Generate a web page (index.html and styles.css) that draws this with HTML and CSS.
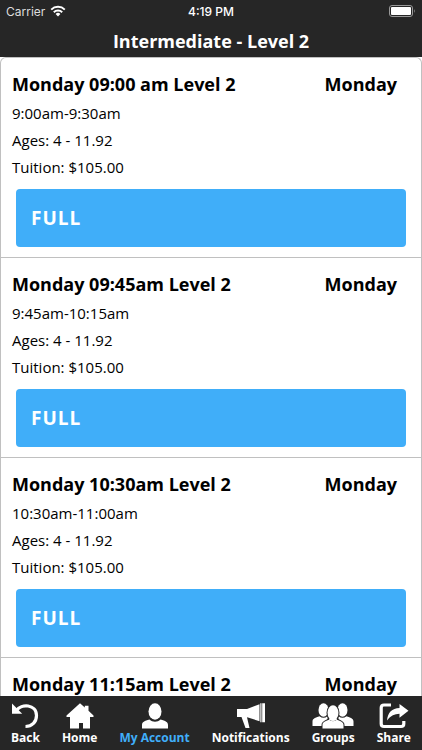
FILE: index.html
```html
<!DOCTYPE html>
<html lang="en">
<head>
    <meta charset="UTF-8">
    <meta name="viewport" content="width=device-width, initial-scale=1.0">
    <title>Intermediate - Level 2</title>
    <link rel="stylesheet" href="styles.css">
</head>
<body>
    <header>
        <div class="status-bar">
            <span class="carrier">
                Carrier
                <svg width="16" height="12" viewBox="0 0 16 12" fill="none" stroke="#fff" stroke-width="2">
                    <path d="M1.2 4.6a9.8 9.8 0 0 1 13.6 0"/>
                    <path d="M3.8 7.3a6.1 6.1 0 0 1 8.4 0"/>
                    <path d="M8 11.4 5.6 9a3.4 3.4 0 0 1 4.8 0z" fill="#fff" stroke="none"/>
                </svg>
            </span>
            <span class="time">4:19 PM</span>
            <span class="battery">
                <svg width="27" height="12" viewBox="0 0 27 12">
                    <rect x="0.5" y="0.5" width="23" height="11" rx="2.5" fill="none" stroke="#999"/>
                    <rect x="2" y="2" width="20" height="8" rx="1" fill="#fff"/>
                    <path d="M25 4q1.6 2 0 4z" fill="#999"/>
                </svg>
            </span>
        </div>
        <h1>Intermediate - Level 2</h1>
    </header>

    <main class="class-list">
        <section class="class-row">
            <h2><span>Monday 09:00 am Level 2</span><span>Monday</span></h2>
            <p>9:00am-9:30am</p>
            <p>Ages: 4 - 11.92</p>
            <p>Tuition: $105.00</p>
            <button type="button" class="status">FULL</button>
        </section>
        <section class="class-row">
            <h2><span>Monday 09:45am Level 2</span><span>Monday</span></h2>
            <p>9:45am-10:15am</p>
            <p>Ages: 4 - 11.92</p>
            <p>Tuition: $105.00</p>
            <button type="button" class="status">FULL</button>
        </section>
        <section class="class-row">
            <h2><span>Monday 10:30am Level 2</span><span>Monday</span></h2>
            <p>10:30am-11:00am</p>
            <p>Ages: 4 - 11.92</p>
            <p>Tuition: $105.00</p>
            <button type="button" class="status">FULL</button>
        </section>
        <section class="class-row">
            <h2><span>Monday 11:15am Level 2</span><span>Monday</span></h2>
        </section>
    </main>

    <nav class="tab-bar">
        <a href="#back">
            <svg width="28" height="26" viewBox="0 0 28 26">
                <path d="M5.5 7.5C10 .5 25.5.8 25.5 12.5c0 6.5-4.500 11-11 11" fill="none" stroke="#fff" stroke-width="3.2"/>
                <path d="M1 .5v10.200h10.200z" fill="#fff"/>
            </svg>
            Back
        </a>
        <a href="#home">
            <svg width="28" height="26" viewBox="0 0 28 26" fill="#fff">
                <path d="M14 .2 18.800 4.500V2.800h3.700v5L27.500 12.500V14H24v11.500h-7V20h-4v5.500H4V14H.5v-1.500z"/>
            </svg>
            Home
        </a>
        <a href="#account" class="active">
            <svg width="28" height="26" viewBox="0 0 28 26" fill="#fff">
                <ellipse cx="14" cy="8.5" rx="6.5" ry="8.2"/>
                <path d="M1 25.500v-3.300c0-3.400 2.500-4.200 7.500-5.700 3 3 8 3 11 0 5 1.500 7.500 2.300 7.500 5.700v3.300z"/>
            </svg>
            My Account
        </a>
        <a href="#notifications">
            <svg width="28" height="26" viewBox="0 0 28 26" fill="#fff">
                <path d="M0 6h10L22.500 1.200v17L11 14.400l-1-.2L12.500 25H8.500L4.500 14H0z"/>
                <path d="M23.300.3h1.200v19h-1.200zM25.200.3H28v19h-2.800z"/>
            </svg>
            Notifications
        </a>
        <a href="#groups">
            <svg width="42" height="26" viewBox="0 0 42 26">
                <g fill="#fff">
                    <ellipse cx="11.5" cy="7" rx="5" ry="6.8"/>
                    <ellipse cx="30.5" cy="7" rx="5" ry="6.8"/>
                    <path d="M.5 23v-4.500c0-3 3-3.500 7-5.200q4 3 8 0V23zM41.500 23v-4.500c0-3-3-3.500-7-5.200q-4 3-8 0V23z"/>
                </g>
                <g fill="#fff" stroke="#262626" stroke-width="2" paint-order="stroke">
                    <path d="M10.500 25.500V22c0-3.200 3-3.700 6.500-5.300q4 2.800 8 0c3.500 1.600 6.500 2.100 6.500 5.300v3.500z"/>
                    <ellipse cx="21" cy="9.7" rx="5.5" ry="7.5"/>
                </g>
                <path d="M17 16.700 18 14h6l1 2.700q-4 2.800-8 0" fill="#fff"/>
            </svg>
            Groups
        </a>
        <a href="#share">
            <svg width="30" height="26" viewBox="0 0 30 26">
                <path d="M12 2H5Q2.200 2 2.200 4.800v15.900q0 2.800 2.800 2.800h17q2.800 0 2.800-2.800V18" fill="none" stroke="#fff" stroke-width="3.2"/>
                <path d="M8 17.500C8.800 9.500 13 5.300 20.500 5V1l9 6.800-9 7v-4C15.500 11 12 12.500 8 17.500z" fill="#fff"/>
            </svg>
            Share
        </a>
    </nav>
</body>
</html>
```
FILE: styles.css
```css
* {
    box-sizing: border-box;
}

body {
    margin: 0;
    height: 100vh;
    display: flex;
    flex-direction: column;
    font-family: "Open Sans", "Noto Sans", sans-serif;
    background-color: #fff;
    color: #000;
}

header {
    background-color: #262626;
    color: #fff;
}

.status-bar {
    display: grid;
    grid-template-columns: 1fr auto 1fr;
    align-items: center;
    height: 22px;
    padding: 0 6px;
    font-family: Inter, Roboto, sans-serif;
    font-size: 12px;
}

.carrier {
    display: flex;
    align-items: center;
    gap: 5px;
    color: #ddd;
}

.time {
    font-weight: 500;
}

.battery {
    display: flex;
    justify-content: flex-end;
}

h1 {
    margin: 0;
    padding: 6px 0 3px;
    font-size: 18px;
    line-height: 26px;
    text-align: center;
}

/* List of classes */
.class-list {
    flex: 1;
    min-height: 0;
    overflow: hidden;
    border: 1px solid #c0c0c0;
    border-bottom: none;
    border-radius: 6px 6px 0 0;
}

.class-row {
    padding: 11px 15px 10px 11px;
    border-bottom: 1px solid #c0c0c0;
}

.class-row h2 {
    display: flex;
    justify-content: space-between;
    margin: 0 0 1px;
    padding-right: 9px;
    font-size: 18px;
    line-height: 30px;
}

.class-row p {
    margin: 0;
    font-size: 15px;
    line-height: 27px;
}

.status {
    display: block;
    width: calc(100% - 4px);
    height: 58px;
    margin: 8px 0 0 4px;
    padding: 0 15px;
    border: none;
    border-radius: 4px;
    background-color: #40aef9;
    color: #fff;
    font-family: inherit;
    font-size: 19px;
    font-weight: bold;
    letter-spacing: 1px;
    text-align: left;
}

/* Bottom navigation */
.tab-bar {
    display: flex;
    justify-content: space-between;
    height: 54px;
    padding: 7px 11px 0;
    background-color: #262626;
}

.tab-bar a {
    display: flex;
    flex-direction: column;
    align-items: center;
    color: #fff;
    font-size: 12px;
    font-weight: bold;
    line-height: 18px;
    text-decoration: none;
}

.tab-bar a.active {
    color: #40aef9;
}
```
